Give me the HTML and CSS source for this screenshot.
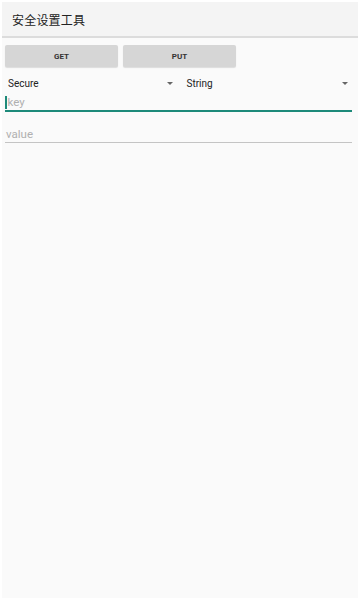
FILE: index.html
```html
<!DOCTYPE html>
<html lang="zh">
<head>
<meta charset="utf-8">
<link rel="stylesheet" href="styles.css">
</head>
<body>
<div class="app">
  <header class="bar"><span class="title">安全设置工具</span></header>
  <main class="content">
    <div class="buttons">
      <div class="btn">GET</div>
      <div class="btn">PUT</div>
    </div>
    <div class="spinners">
      <div class="spinner"><span>Secure</span><i class="arrow"></i></div>
      <div class="spinner"><span>String</span><i class="arrow"></i></div>
    </div>
    <div class="field focused"><span class="cursor"></span><span class="hint">key</span></div>
    <div class="field"><span class="hint">value</span></div>
  </main>
</div>
</body>
</html>
```
FILE: styles.css
```css
html, body { margin: 0; padding: 0; }
body {
  width: 360px; height: 600px; background: #ffffff;
  font-family: Roboto, "Noto Sans", "Noto Sans CJK SC", sans-serif;
}
.app {
  box-sizing: border-box;
  height: 600px;
  margin: 0 2px 0 2px;
  padding-top: 2px;
  padding-bottom: 2px;
  display: flex; flex-direction: column;
}
.bar {
  height: 34px;
  background: #f4f4f4;
  border-bottom: 2px solid #dcdcdc;
  display: flex; align-items: center;
  padding-left: 10px;
  flex: none;
}
.title {
  font-family: "Noto Sans CJK SC", sans-serif;
  font-size: 12px; color: #222; letter-spacing: 0.2px;
}
.content {
  flex: 1; background: #fafafa;
  padding: 7px 6px 0 3px;
}
.buttons { display: flex; gap: 5px; }
.btn {
  width: 113px; height: 22px;
  background: #d6d6d6; border-radius: 2px;
  box-shadow: 0 1px 1px rgba(0,0,0,0.12);
  display: flex; align-items: center; justify-content: center;
  font-size: 8px; font-weight: bold; color: #333;
}
.spinners { display: flex; gap: 4px; margin-top: 5px; height: 22px; align-items: center; }
.spinner {
  width: 172px; display: flex; align-items: center; justify-content: space-between;
  padding-left: 3px; box-sizing: border-box; font-size: 10px; color: #222;
}
.spinner + .spinner { padding-left: 6px; }
.arrow {
  width: 0; height: 0; margin-right: 4px;
  border-left: 3.5px solid transparent; border-right: 3.5px solid transparent;
  border-top: 3.5px solid #666;
}
.field {
  height: 22px; display: flex; align-items: flex-end; position: relative;
  border-bottom: 1.5px solid #c4c4c4;
  font-size: 11.5px; box-sizing: border-box; padding-bottom: 1px;
}
.field.focused { border-bottom: 2px solid #1d8a7a; height: 18px; align-items: center; padding-bottom: 0; }
.field + .field { margin-top: 9px; }
.hint { color: #b0b0b0; padding-left: 1px; }
.cursor { width: 1.5px; height: 13px; background: #1d8a7a; }
```
